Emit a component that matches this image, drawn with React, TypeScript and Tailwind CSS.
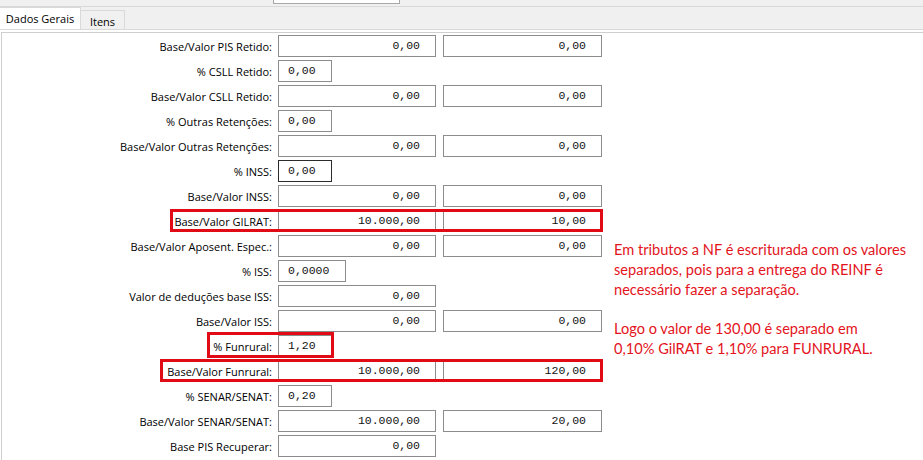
import React from "react";

type Row = {
  label: string;
  kind: "pair" | "single" | "short" | "iss";
  a?: string;
  b?: string;
  focused?: boolean;
  mark?: "gilrat" | "funrural" | "funruralBase";
};

const rows: Row[] = [
  { label: "Base/Valor PIS Retido:", kind: "pair", a: "0,00", b: "0,00" },
  { label: "% CSLL Retido:", kind: "short", a: "0,00" },
  { label: "Base/Valor CSLL Retido:", kind: "pair", a: "0,00", b: "0,00" },
  { label: "% Outras Retenções:", kind: "short", a: "0,00" },
  { label: "Base/Valor Outras Retenções:", kind: "pair", a: "0,00", b: "0,00" },
  { label: "% INSS:", kind: "short", a: "0,00", focused: true },
  { label: "Base/Valor INSS:", kind: "pair", a: "0,00", b: "0,00" },
  { label: "Base/Valor GILRAT:", kind: "pair", a: "10.000,00", b: "10,00", mark: "gilrat" },
  { label: "Base/Valor Aposent. Espec.:", kind: "pair", a: "0,00", b: "0,00" },
  { label: "% ISS:", kind: "iss", a: "0,0000" },
  { label: "Valor de deduções base ISS:", kind: "single", a: "0,00" },
  { label: "Base/Valor ISS:", kind: "pair", a: "0,00", b: "0,00" },
  { label: "% Funrural:", kind: "short", a: "1,20", mark: "funrural" },
  { label: "Base/Valor Funrural:", kind: "pair", a: "10.000,00", b: "120,00", mark: "funruralBase" },
  { label: "% SENAR/SENAT:", kind: "short", a: "0,20" },
  { label: "Base/Valor SENAR/SENAT:", kind: "pair", a: "10.000,00", b: "20,00" },
  { label: "Base PIS Recuperar:", kind: "single", a: "0,00" },
];

const mono = "font-['Liberation_Mono','Courier_New',monospace] text-[11.5px] text-[#111]";

function NumBox({ value, width }: { value: string; width: string }) {
  return (
    <div
      className={`${width} h-[22px] shrink-0 border border-[#8c8c8c] bg-white flex items-center justify-end pr-[15px] ${mono}`}
    >
      {value}
    </div>
  );
}

function PctBox({ value, width, focused }: { value: string; width: string; focused?: boolean }) {
  return (
    <div
      className={`${width} h-[22px] shrink-0 border ${focused ? "border-[#2b2b2b]" : "border-[#8c8c8c]"} bg-white flex items-center pl-[9px] ${mono}`}
    >
      {value}
    </div>
  );
}

function FormRow({ row }: { row: Row }) {
  return (
    <div className="relative flex h-[25px] items-start">
      <div className="w-[270px] h-[22px] flex items-center justify-end pt-[2px] text-[11px] text-black">
        {row.label}
      </div>
      <div className="ml-[6px] flex gap-[7px]">
        {row.kind === "pair" && (
          <>
            <NumBox value={row.a!} width="w-[158px]" />
            <NumBox value={row.b!} width="w-[159px]" />
          </>
        )}
        {row.kind === "single" && <NumBox value={row.a!} width="w-[158px]" />}
        {row.kind === "short" && <PctBox value={row.a!} width="w-[54px]" focused={row.focused} />}
        {row.kind === "iss" && <PctBox value={row.a!} width="w-[68px]" />}
      </div>
      {row.mark === "gilrat" && (
        <div className="pointer-events-none absolute left-[168px] top-[-1px] w-[433px] h-[23px] border-[3px] border-[#e00b14]" />
      )}
      {row.mark === "funrural" && (
        <div className="pointer-events-none absolute left-[205px] top-[-3px] w-[127px] h-[26px] border-[3px] border-[#e00b14]" />
      )}
      {row.mark === "funruralBase" && (
        <div className="pointer-events-none absolute left-[158px] top-[-1px] w-[443px] h-[23px] border-[3px] border-[#e00b14]" />
      )}
    </div>
  );
}

export default function App() {
  return (
    <div className="w-[923px] h-[460px] overflow-hidden bg-white font-['Open_Sans','Noto_Sans',sans-serif] text-black">
      {/* strip of the field above, scrolled almost out of view */}
      <div className="h-[7px] bg-[#f0f0f0] border-b border-[#d9d9d9]">
        <div className="ml-[273px] w-[127px] h-[4px] border-x border-b border-[#a8a8a8] bg-white" />
      </div>

      {/* tab strip */}
      <div className="h-[23px] bg-[#f0f0f0] border-b border-[#d9d9d9] flex items-end">
        <div className="h-[22px] w-[81px] bg-white border-r border-t border-[#d9d9d9] flex items-center justify-center text-[11px] leading-none">
          Dados Gerais
        </div>
        <div className="h-[19px] w-[44px] border-r border-t border-[#d9d9d9] flex items-center justify-center pt-[2px] text-[11px] leading-none">
          Itens
        </div>
      </div>

      {/* panel */}
      <div className="mt-[2px] ml-px h-[440px] border-t border-l border-[#cfcfcf] bg-white">
        <div className="flex pt-[2px]">
          <div className="w-[612px] shrink-0">
            {rows.map((r) => (
              <FormRow key={r.label} row={r} />
            ))}
          </div>
          <div className="mt-[205px] text-[#e3141c] font-['Lato','Open_Sans',sans-serif] text-[14.6px] leading-[20px] whitespace-nowrap">
            <p>
              Em tributos a NF é escriturada com os valores
              <br />
              separados, pois para a entrega do REINF é
              <br />
              necessário fazer a separação.
            </p>
            <p className="mt-[19px]">
              Logo o valor de 130,00 é separado em
              <br />
              0,10% GilRAT e 1,10% para FUNRURAL.
            </p>
          </div>
        </div>
      </div>
    </div>
  );
}
